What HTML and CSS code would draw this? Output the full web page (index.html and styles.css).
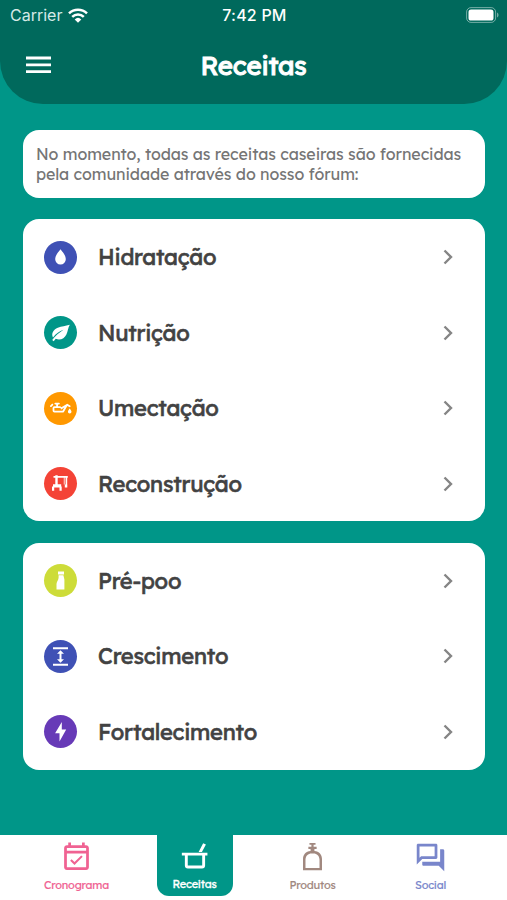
FILE: index.html
```html
<!DOCTYPE html>
<html lang="pt-BR">

<head>
  <title>Receitas</title>
  <meta charset="utf-8">
  <link rel="stylesheet" href="styles.css">
</head>

<body>
  <div id="container">
    <header>
      <div class="status">
        <div class="carrier">
          <span>Carrier</span>
          <svg width="20" height="15" viewBox="0 0 20 15">
            <g fill="none" stroke="currentColor" stroke-width="2.5">
              <path d="M1 5.3a13 13 0 0 1 18 0"/>
              <path d="M4.2 8.8a8.3 8.3 0 0 1 11.6 0"/>
            </g>
            <path fill="currentColor" d="M6.7 11.4a4.8 4.8 0 0 1 6.6 0L10 14.8z"/>
          </svg>
        </div>
        <span class="clock">7:42 PM</span>
        <svg class="battery" width="33" height="16" viewBox="0 0 33 16">
          <rect x=".6" y=".6" width="29" height="14.8" rx="4.4" fill="none" stroke="#fff" stroke-opacity=".45"/>
          <rect x="2.5" y="2.5" width="25" height="11" rx="2.6" fill="#fff"/>
          <path d="M31 5.5v5c2-.8 2-4.2 0-5z" fill="#fff" fill-opacity=".45"/>
        </svg>
      </div>
      <div class="title">
        <svg width="25" height="18" viewBox="0 0 25 18">
          <path fill="#fff" d="M0 .6h25v2.8H0zM0 7.5h25v2.8H0zM0 14.3h25v2.8H0z"/>
        </svg>
        <h1>Receitas</h1>
      </div>
    </header>

    <main>
      <p class="card notice">No momento, todas as receitas caseiras são fornecidas<br>
        pela comunidade através do nosso fórum:</p>

      <ul class="card">
        <li>
          <svg class="icon indigo" viewBox="0 0 33 33">
            <path d="M16.5 8.3c2.5 3.2 5.3 6.2 5.3 10a5.3 5.3 0 0 1-10.6 0c0-3.8 2.8-6.8 5.3-10z"/>
          </svg>
          <span>Hidratação</span>
          <svg class="chevron" viewBox="0 0 10 16"><path d="M1.5 1.5 8 8l-6.500 6.500"/></svg>
        </li>
        <li>
          <svg class="icon teal" viewBox="0 0 33 33">
            <path d="M25.800 8.800c-4.500 1.500-8 1.300-12 3-4.600 2-6.800 6.200-4.800 9.700 3-4 6.300-6 10.600-7.700-4.300 3-8.300 5.800-11.400 10.200l1.500 1.200 2-2.400c4.600 1.900 8.700-.3 10.700-4.400 1.600-3.100 1.600-6.500 3.400-9.600z"/>
          </svg>
          <span>Nutrição</span>
          <svg class="chevron" viewBox="0 0 10 16"><path d="M1.500 1.500 8 8l-6.500 6.500"/></svg>
        </li>
        <li>
          <svg class="icon orange" viewBox="0 0 33 33">
            <path transform="translate(5.900 5.300) scale(.9)" d="M22 12.500C22 12.500 24 14.670 24 16A2 2 0 0 1 22 18A2 2 0 0 1 20 16C20 14.670 22 12.500 22 12.500M6 6H10A1 1 0 0 1 11 7A1 1 0 0 1 10 8H9V10H11C11.740 10 12.390 10.400 12.730 11L19.240 7.240L22.500 9.130C23 9.400 23.140 10 22.870 10.500C22.590 10.970 22 11.140 21.500 10.860L19.400 9.650L15.750 15.970C15.410 16.580 14.750 17 14 17H5A2 2 0 0 1 3 15V12A2 2 0 0 1 5 10H7V8H6A1 1 0 0 1 5 7A1 1 0 0 1 6 6M5 12V15H14L16.060 11.430L12.600 13.430L11.690 12H5M.380 9.210L2.090 7.500C2.500 7.110 3.110 7.110 3.500 7.500C3.890 7.890 3.890 8.500 3.500 8.910L1.790 10.620C1.400 11 .770 11 .380 10.620C0 10.230 0 9.600 .380 9.210Z"/>
          </svg>
          <span>Umectação</span>
          <svg class="chevron" viewBox="0 0 10 16"><path d="M1.500 1.500 8 8l-6.500 6.500"/></svg>
        </li>
        <li>
          <svg class="icon red" viewBox="0 0 33 33">
            <path d="M9.500 9h14.300v1.800H9.500zM11.300 8.200h2.400V18h-2.400zM21.600 10.500h1.600V19h-1.600zM19.800 10.500h.8v7h-.8zM20.800 17.500h2.500v3h-2.500zM9 17.300h8.200v3.300H9zM8 19.500h2.200v4.200H8zM15.500 19.500h2.200v4.200h-2.200z"/>
          </svg>
          <span>Reconstrução</span>
          <svg class="chevron" viewBox="0 0 10 16"><path d="M1.500 1.500 8 8l-6.500 6.500"/></svg>
        </li>
      </ul>

      <ul class="card">
        <li>
          <svg class="icon lime" viewBox="0 0 33 33">
            <path d="M14 7.500h6v3h-6zM14.600 11.200h4.800l1 4.300v10h-7.900v-5.500c.2-2.500 2.100-4 2.100-6.500z"/>
          </svg>
          <span>Pré-poo</span>
          <svg class="chevron" viewBox="0 0 10 16"><path d="M1.500 1.500 8 8l-6.500 6.500"/></svg>
        </li>
        <li>
          <svg class="icon blue" viewBox="0 0 33 33">
            <path d="M9 7.300h15v2H9zM9 23.700h15v2H9zM16.500 10.300l3.500 3.500h-2.500v5.400H20l-3.500 3.500-3.500-3.500h2.500v-5.400H13z"/>
          </svg>
          <span>Crescimento</span>
          <svg class="chevron" viewBox="0 0 10 16"><path d="M1.500 1.500 8 8l-6.500 6.500"/></svg>
        </li>
        <li>
          <svg class="icon purple" viewBox="0 0 33 33">
            <path d="M17.800 7v7.500h4.400l-6.700 12v-8.300h-4.400z"/>
          </svg>
          <span>Fortalecimento</span>
          <svg class="chevron" viewBox="0 0 10 16"><path d="M1.500 1.500 8 8l-6.500 6.500"/></svg>
        </li>
      </ul>
    </main>

    <nav>
      <a class="tab pink">
        <svg viewBox="0 0 24 24">
          <path d="M19 3h-1V1h-2v2H8V1H6v2H5c-1.110 0-2 .9-2 2v14c0 1.100.890 2 2 2h14c1.100 0 2-.9 2-2V5c0-1.100-.9-2-2-2zm0 16H5V9h14v10zM5 7V5h14v2H5zM10.560 17.460l5.940-5.930-1.070-1.060-4.870 4.870-2.110-2.110-1.060 1.060z"/>
        </svg>
        <span>Cronograma</span>
      </a>
      <a class="tab active">
        <svg viewBox="0 0 24 24">
          <path d="M2.800 9.200h18.600v2.100h-1.700v7.200a2.200 2.200 0 0 1-2.200 2.200H7.200A2.200 2.200 0 0 1 5 18.500v-7.200H2.800zM7.100 11.300v7.300h10.500v-7.300zM15 8.700l3.300-6.400 2 1-2.900 5.400z" fill-rule="evenodd"/>
        </svg>
        <span>Receitas</span>
      </a>
      <a class="tab brown">
        <svg viewBox="0 0 24 24">
          <path d="M9.800 1.500h4.400v1.200h-1.400v1.500h2.200v1.600h-1.600v1.500c3.500.3 5.500 2.600 5.500 5.800V21.300H5.100v-8.200c0-3.200 2-5.500 5.500-5.800V5.800H9V4.200h2.200V2.700H9.800zM6.900 19.600h10.200v-6c0-2.900-1.900-4.600-4.400-4.600h-1.400c-2.500 0-4.400 1.700-4.400 4.600z" fill-rule="evenodd"/>
        </svg>
        <span>Produtos</span>
      </a>
      <a class="tab violet">
        <svg viewBox="0 0 24 24">
          <path d="M15 4v7H5.170L4 12.170V4h11m1-2H3c-.550 0-1 .450-1 1v14l4-4h10c.550 0 1-.450 1-1V3c0-.550-.450-1-1-1zm5 4h-2v9H6v2c0 .550.450 1 1 1h11l4 4V7c0-.550-.450-1-1-1z"/>
        </svg>
        <span>Social</span>
      </a>
    </nav>
  </div>
</body>

</html>
```
FILE: styles.css
```css
* {
  box-sizing: border-box;
}

body {
  margin: 0;
}

#container {
  height: 900px;
  display: flex;
  flex-direction: column;
  background-color: #009688;
  font-family: Lexend, Inter, sans-serif;
  color: #424242;
}

header {
  height: 103.5px;
  background-color: #00695c;
  border-radius: 0 0 43px 43px;
  color: white;
}

.status {
  height: 30px;
  display: grid;
  grid-template-columns: 1fr auto 1fr;
  align-items: center;
  padding: 0 8px 0 10px;
  font-family: Inter, sans-serif;
  font-size: 16px;
}

.carrier {
  display: flex;
  align-items: center;
  gap: 6px;
  color: #d5eae7;
}

.carrier svg {
  color: white;
}

.clock {
  font-weight: 500;
  letter-spacing: .2px;
}

.battery {
  justify-self: end;
}

.title {
  height: 70px;
  display: grid;
  grid-template-columns: 25px 1fr 25px;
  align-items: center;
  padding: 0 26px;
}

h1 {
  margin: 0;
  text-align: center;
  font-size: 26px;
  font-weight: 400;
  letter-spacing: -.25px;
  -webkit-text-stroke: 1px;
}

main {
  flex: 1;
  display: flex;
  flex-direction: column;
  gap: 21.75px;
  padding: 26.5px 22px 0 22.5px;
}

.card {
  margin: 0;
  padding: 0;
  background-color: white;
  border-radius: 16px;
  list-style: none;
}

.notice {
  height: 67.5px;
  padding: 14px 13.5px;
  font-size: 16px;
  line-height: 20px;
  letter-spacing: -.08px;
  color: #757575;
  white-space: nowrap;
}

li {
  height: 75.5px;
  display: flex;
  align-items: center;
  padding: 0 32px 0 21.5px;
  font-size: 22px;
  font-weight: 400;
  letter-spacing: -.23px;
  -webkit-text-stroke: .6px;
}

li span {
  flex: 1;
  padding-left: 21px;
}

.icon {
  width: 33px;
  height: 33px;
  border-radius: 50%;
  fill: white;
}

.chevron {
  width: 10px;
  height: 16px;
  fill: none;
  stroke: #858585;
  stroke-width: 2.4;
}

.indigo {
  background-color: #3f51b5;
}

.teal {
  background-color: #009688;
}

.orange {
  background-color: #ff9800;
}

.red {
  background-color: #f44336;
}

.lime {
  background-color: #cddc39;
}

.blue {
  background-color: #3f51b5;
}

.purple {
  background-color: #673ab7;
}

/* bottom tab bar */
nav {
  height: 65px;
  display: grid;
  grid-template-columns: repeat(4, 118px);
  justify-content: center;
  background-color: white;
}

.tab {
  display: flex;
  flex-direction: column;
  align-items: center;
  padding-top: 6px;
  font-size: 11px;
  font-weight: 400;
  letter-spacing: -.22px;
  -webkit-text-stroke: .15px;
}

.tab svg {
  width: 33px;
  height: 33px;
  fill: currentColor;
}

.tab span {
  margin-top: 4px;
}

.pink {
  color: #f06292;
}

.brown {
  color: #a1887f;
}

.violet {
  color: #7986cb;
}

.active {
  justify-self: center;
  width: 76px;
  height: 61px;
  padding-top: 5px;
  background-color: #009688;
  border-radius: 0 0 12px 12px;
  color: white;
  -webkit-text-stroke: .3px;
}
```
